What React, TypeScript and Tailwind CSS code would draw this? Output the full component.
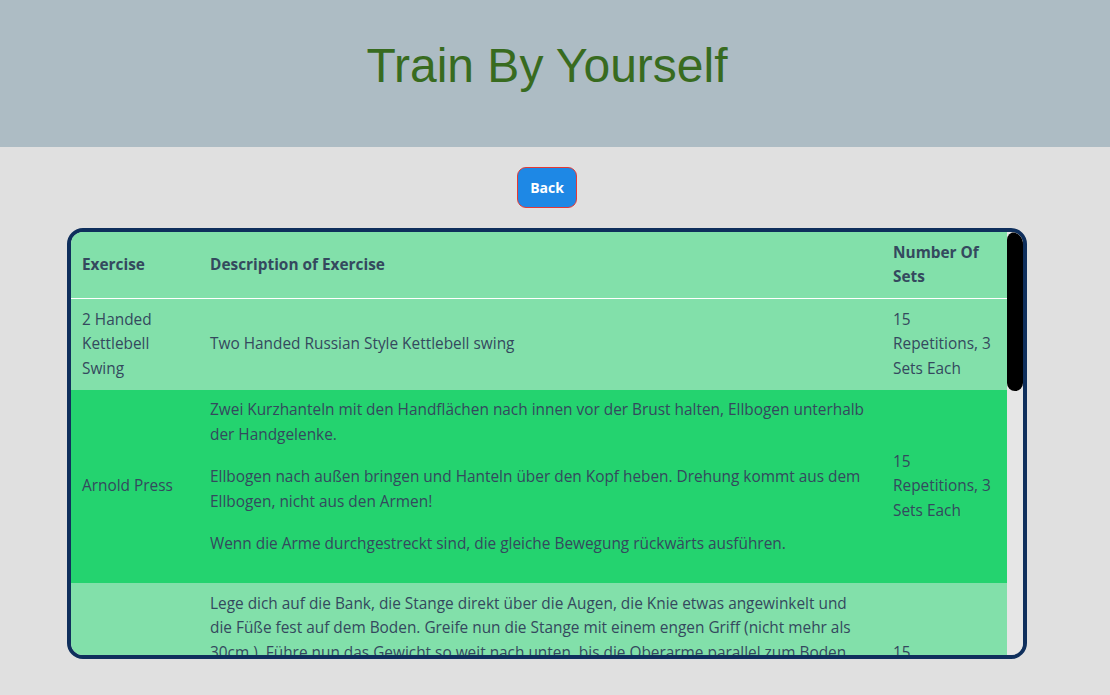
import React from "react";

const rows: { name: string; desc: string[]; sets: string; dark?: boolean }[] = [
  {
    name: "2 Handed Kettlebell Swing",
    desc: ["Two Handed Russian Style Kettlebell swing"],
    sets: "15 Repetitions, 3 Sets Each",
  },
  {
    name: "Arnold Press",
    desc: [
      "Zwei Kurzhanteln mit den Handflächen nach innen vor der Brust halten, Ellbogen unterhalb der Handgelenke.",
      "Ellbogen nach außen bringen und Hanteln über den Kopf heben. Drehung kommt aus dem Ellbogen, nicht aus den Armen!",
      "Wenn die Arme durchgestreckt sind, die gleiche Bewegung rückwärts ausführen.",
    ],
    sets: "15 Repetitions, 3 Sets Each",
    dark: true,
  },
  {
    name: "Bankdrücken",
    desc: [
      "Lege dich auf die Bank, die Stange direkt über die Augen, die Knie etwas angewinkelt und die Füße fest auf dem Boden. Greife nun die Stange mit einem engen Griff (nicht mehr als 30cm ). Führe nun das Gewicht so weit nach unten, bis die Oberarme parallel zum Boden sind, und drücke es dann kontrolliert wieder nach oben. Die Ellbogen bleiben dabei eng am Körper, damit der Trizeps die Hauptarbeit übernimmt. Atme beim Absenken ein und beim Hochdrücken wieder aus. Halte die Spannung im ganzen Körper während der gesamten Übung.",
    ],
    sets: "15 Repetitions, 3 Sets Each",
  },
  {
    name: "Bizepscurls",
    desc: [
      "Stelle dich aufrecht hin, die Kurzhanteln in den Händen, die Handflächen zeigen nach vorne.",
      "Beuge die Arme im Ellbogen und führe die Hanteln kontrolliert zu den Schultern. Die Oberarme bleiben dabei ruhig am Körper.",
    ],
    sets: "15 Repetitions, 3 Sets Each",
    dark: true,
  },
  {
    name: "Kniebeugen",
    desc: [
      "Stelle dich schulterbreit hin, die Fußspitzen leicht nach außen gedreht. Senke das Gesäß nach hinten unten ab, als würdest du dich auf einen Stuhl setzen, und halte den Rücken gerade.",
    ],
    sets: "15 Repetitions, 3 Sets Each",
  },
];

export default function App() {
  return (
    <div
      className="min-h-[695px] bg-[#e0e0e0]"
      style={{ fontFamily: '"Open Sans", "Liberation Sans", sans-serif' }}
    >
      <header className="flex h-[147px] items-center justify-center bg-[#adbcc4] pb-4 pr-[16px]">
        <h1
          className="text-[48px] leading-none text-[#386b1f]"
          style={{ fontFamily: '"Liberation Sans", Arial, sans-serif' }}
        >
          Train By Yourself
        </h1>
      </header>
      <div className="w-[1094px]">
        <div className="flex justify-center pt-5">
          <button className="h-[41px] w-[60px] rounded-[9px] border border-[#e53935] bg-[#1e88e5] text-[14px] font-bold text-white">
            Back
          </button>
        </div>
        <div className="mx-auto mt-5 flex h-[431px] w-[960px] overflow-hidden rounded-[16px] border-4 border-[#0f2f5c]">
          <div className="h-full w-[936px] overflow-hidden">
            <table className="w-[936px] table-fixed border-collapse text-left text-[15.4px] leading-[24.5px] text-[#34495e]">
              <colgroup>
                <col className="w-[128px]" />
                <col className="w-[683px]" />
                <col />
              </colgroup>
              <thead>
                <tr className="border-b border-white bg-[#82e0aa]">
                  <th className="px-[11px] py-[8.5px] align-middle font-bold">Exercise</th>
                  <th className="px-[11px] py-[8.5px] align-middle font-bold">Description of Exercise</th>
                  <th className="px-[11px] py-[8.5px] align-middle font-bold">Number Of Sets</th>
                </tr>
              </thead>
              <tbody>
                {rows.map((r, i) => (
                  <tr key={i} className={r.dark ? "bg-[#24d36f]" : "bg-[#82e0aa]"}>
                    <td className="px-[11px] py-[8.5px] align-middle">{r.name}</td>
                    <td className="px-[11px] py-[8.5px] align-middle">
                      {r.desc.length === 1
                        ? r.desc[0]
                        : r.desc.map((p, j) => (
                            <p key={j} className="mb-[18px]">
                              {p}
                            </p>
                          ))}
                    </td>
                    <td className="px-[11px] py-[8.5px] align-middle">{r.sets}</td>
                  </tr>
                ))}
              </tbody>
            </table>
          </div>
          <div className="h-full w-[16px] bg-[#e6e6e6]">
            <div className="h-[159px] w-[16px] rounded-full bg-black" />
          </div>
        </div>
      </div>
    </div>
  );
}
